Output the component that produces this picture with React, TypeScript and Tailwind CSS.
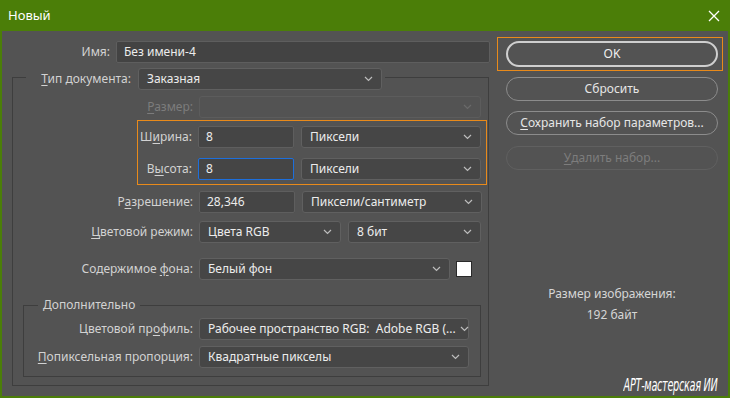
import React from "react";

const Chevron = ({ dim = false }: { dim?: boolean }) => (
  <svg width="9" height="6" viewBox="0 0 9 6" className="shrink-0">
    <path
      d="M1 1 L4.5 4.5 L8 1"
      fill="none"
      stroke={dim ? "#6a6a6a" : "#bdbdbd"}
      strokeWidth="1.2"
    />
  </svg>
);

const U = ({ children }: { children: React.ReactNode }) => (
  <span className="underline underline-offset-2">{children}</span>
);

const Field = ({
  value,
  width,
  focus = false,
}: {
  value: string;
  width: string;
  focus?: boolean;
}) => (
  <div
    className={`${width} h-[22px] flex items-center px-[7px] rounded-[2px] bg-[#454545] border ${
      focus ? "border-[#1d6fdc]" : "border-[#5e5e5e]"
    } text-[#ececec] whitespace-nowrap`}
  >
    {value}
  </div>
);

const Select = ({
  value,
  width,
  disabled = false,
}: {
  value?: string;
  width: string;
  disabled?: boolean;
}) => (
  <div
    className={`${width} h-[22px] flex items-center justify-between gap-[4px] pl-[8px] pr-[8px] rounded-[3px] border ${
      disabled
        ? "border-[#5c5c5c] bg-[#535353]"
        : "border-[#606060] bg-[#464646] text-[#ececec]"
    }`}
  >
    <span className="whitespace-pre">{value}</span>
    <Chevron dim={disabled} />
  </div>
);

const Label = ({
  children,
  width,
  dim = false,
}: {
  children: React.ReactNode;
  width: string;
  dim?: boolean;
}) => (
  <div
    className={`${width} shrink-0 text-right whitespace-nowrap ${
      dim ? "text-[#7c7c7c]" : "text-[#d2d2d2]"
    }`}
  >
    {children}
  </div>
);

export default function App() {
  return (
    <div
      className="w-[730px] h-[398px] bg-[#4b7e08] flex flex-col text-[12px] leading-none"
      style={{ fontFamily: '"Noto Sans", "Open Sans", sans-serif' }}
    >
      {/* title bar */}
      <div className="h-[31px] shrink-0 flex items-center justify-between pl-[8px] pr-[10px] text-white">
        <span className="text-[13px]">Новый</span>
        <svg width="12" height="12" viewBox="0 0 12 12">
          <path d="M1 1 L11 11 M11 1 L1 11" stroke="#fff" strokeWidth="1.3" />
        </svg>
      </div>

      <div className="flex-1 mx-[2px] mb-[2px] bg-[#535353] flex relative">
        {/* left column */}
        <div className="w-[488px] shrink-0 flex flex-col pt-[10px]">
          <div className="flex items-center gap-[6px]">
            <Label width="w-[108px]">Имя:</Label>
            <div className="w-[374px] h-[22px] flex items-center px-[7px] rounded-[2px] bg-[#434343] border border-[#5e5e5e] text-[#ececec]">
              Без имени-4
            </div>
          </div>

          <div className="ml-[10px] mt-[14px] w-[477px] h-[309px] border border-[#3e3e3e] flex flex-col">
            {/* legend row */}
            <div className="-mt-[10px] ml-[13px] flex items-center gap-[7px] bg-[#535353] w-[359px] pl-[11px]">
              <Label width="w-[94px]">
                <U>Т</U>ип документа:
              </Label>
              <Select value="Заказная" width="w-[244px]" />
            </div>

            <div className="mt-[6px] flex items-center gap-[6px]">
              <Label width="w-[180px]" dim>
                <U>Р</U>азмер:
              </Label>
              <Select width="w-[282px]" disabled />
            </div>

            <div className="mt-[2px] ml-[124px] w-[350px] border border-[#e98a1a] flex flex-col gap-[10px] pt-[5px] pb-[4px]">
              <div className="flex items-center gap-[6px]">
                <Label width="w-[54px]">
                  Ш<U>и</U>рина:
                </Label>
                <Field value="8" width="w-[96px]" />
                <Select value="Пиксели" width="w-[180px] ml-[1px]" />
              </div>
              <div className="flex items-center gap-[6px]">
                <Label width="w-[54px]">
                  В<U>ы</U>сота:
                </Label>
                <Field value="8" width="w-[96px]" focus />
                <Select value="Пиксели" width="w-[180px] ml-[1px]" />
              </div>
            </div>

            <div className="mt-[6px] flex items-center gap-[6px]">
              <Label width="w-[180px]">
                Р<U>а</U>зрешение:
              </Label>
              <Field value="28,346" width="w-[96px]" />
              <Select value="Пиксели/сантиметр" width="w-[180px] ml-[1px]" />
            </div>

            <div className="mt-[8px] flex items-center gap-[6px]">
              <Label width="w-[180px]">
                <U>Ц</U>ветовой режим:
              </Label>
              <Select value="Цвета RGB" width="w-[142px]" />
              <Select value="8 бит" width="w-[133px] ml-[1px]" />
            </div>

            <div className="mt-[15px] flex items-center gap-[6px]">
              <Label width="w-[180px]">
                Содержимое <U>ф</U>она:
              </Label>
              <Select value="Белый фон" width="w-[251px]" />
              <div className="w-[16px] h-[16px] bg-white border border-[#2a2a2a]" />
            </div>

            {/* Дополнительно */}
            <div className="mt-[25px] ml-[10px] w-[458px] h-[72px] border border-[#3e3e3e] flex flex-col">
              <div className="-mt-[7px] ml-[14px] w-fit px-[5px] bg-[#535353] text-[#d2d2d2]">
                Дополнительно
              </div>
              <div className="mt-[7px] flex items-center gap-[6px]">
                <Label width="w-[169px]">
                  Цветовой пр<U>о</U>филь:
                </Label>
                <Select
                  value="Рабочее пространство RGB:  Adobe RGB (..."
                  width="w-[270px]"
                />
              </div>
              <div className="mt-[6px] flex items-center gap-[6px]">
                <Label width="w-[169px]">
                  <U>П</U>опиксельная пропорция:
                </Label>
                <Select value="Квадратные пикселы" width="w-[270px]" />
              </div>
            </div>
          </div>
        </div>

        {/* right column */}
        <div className="flex-1 flex flex-col items-start pl-[7px] pt-[6px]">
          <div className="w-[226px] h-[34px] border border-[#e98a1a] flex items-center justify-end pr-[4px]">
            <div className="w-[212px] h-[26px] rounded-full border-2 border-[#cfcfcf] flex items-center justify-center text-[#f0f0f0]">
              OK
            </div>
          </div>
          <div className="ml-[9px] mt-[6px] w-[212px] h-[24px] rounded-full border-[1.5px] border-[#8c8c8c] flex items-center justify-center text-[#e6e6e6]">
            Сбросить
          </div>
          <div className="ml-[9px] mt-[10px] w-[212px] h-[24px] rounded-full border-[1.5px] border-[#8c8c8c] flex items-center justify-center text-[#e6e6e6]">
            <U>С</U>охранить набор параметров...
          </div>
          <div className="ml-[9px] mt-[11px] w-[212px] h-[24px] rounded-full border-[1.5px] border-[#606060] flex items-center justify-center text-[#7d7d7d]">
            <U>У</U>далить набор...
          </div>

          <div className="ml-[9px] mt-[118px] w-[212px] flex flex-col items-center gap-[9px] text-[#d6d6d6]">
            <span>Размер изображения:</span>
            <span>192 байт</span>
          </div>
        </div>

        <div
          className="absolute right-[10px] bottom-[2px] text-white text-[18px] italic tracking-[-0.5px] origin-right scale-x-[0.6]"
          style={{ fontFamily: '"DejaVu Sans Condensed", "DejaVu Sans", sans-serif' }}
        >
          АРТ-мастерская ИИ
        </div>
      </div>
    </div>
  );
}
